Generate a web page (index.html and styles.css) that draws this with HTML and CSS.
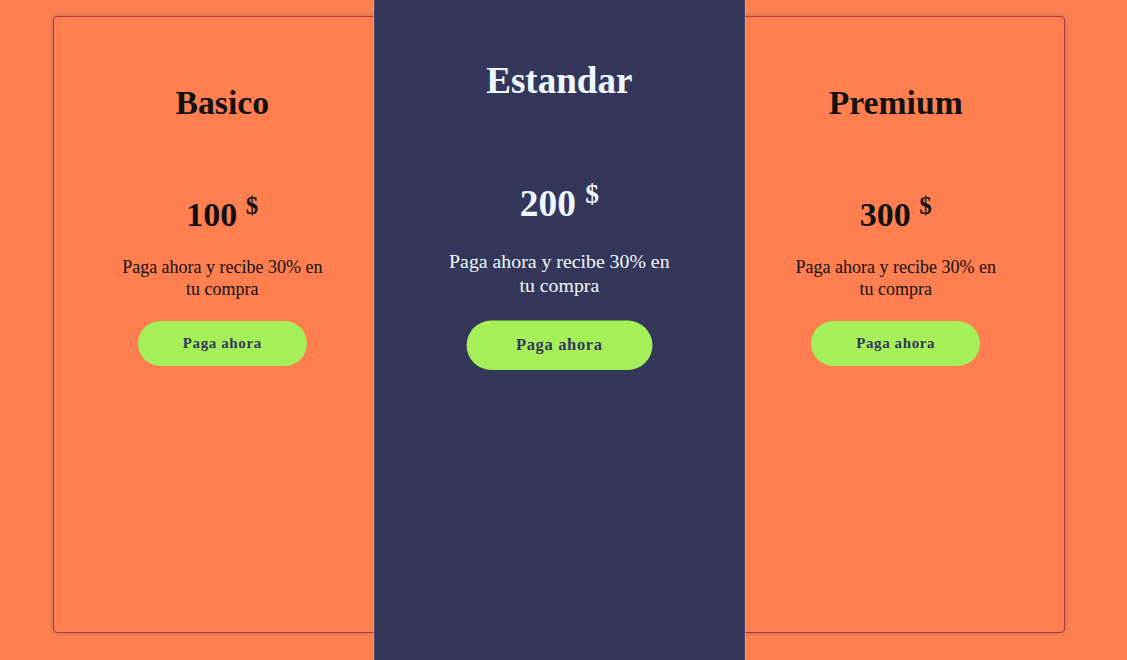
FILE: index.html
```html
<!DOCTYPE html>
<html lang="es">
<head>
<meta charset="utf-8">
<title>Planes</title>
<link rel="stylesheet" href="styles.css">
</head>
<body>
  <main class="plans">
    <section class="plan">
      <h1 class="plan-title">Basico</h1>
      <h2 class="plan-price">100 <sup class="currency">$</sup></h2>
      <p class="plan-text">Paga ahora y recibe 30% en tu compra</p>
      <button class="plan-btn">Paga ahora</button>
    </section>
    <section class="plan plan-featured">
      <h1 class="plan-title">Estandar</h1>
      <h2 class="plan-price">200 <sup class="currency">$</sup></h2>
      <p class="plan-text">Paga ahora y recibe 30% en tu compra</p>
      <button class="plan-btn">Paga ahora</button>
    </section>
    <section class="plan">
      <h1 class="plan-title">Premium</h1>
      <h2 class="plan-price">300 <sup class="currency">$</sup></h2>
      <p class="plan-text">Paga ahora y recibe 30% en tu compra</p>
      <button class="plan-btn">Paga ahora</button>
    </section>
  </main>
</body>
</html>
```

FILE: styles.css
```css
html {
  overflow: hidden;
}

body {
  margin: 0;
  padding: 16px 62px 0 53px;
  min-height: 660px;
  box-sizing: border-box;
  background: #ff7f50;
  font-family: "Liberation Serif", "Times New Roman", serif;
  color: #111;
}

.plans {
  display: flex;
  height: 617px;
  box-sizing: border-box;
  border: 1px solid #b0383c;
  border-radius: 4px;
  box-shadow: 0 0 4px rgba(120, 120, 120, 0.7);
}

.plan {
  flex: 1 1 0;
  display: flex;
  flex-direction: column;
  align-items: center;
  text-align: center;
  padding: 67px 60px 0;
}

.plan-featured {
  background: #35375a;
  color: #f0f8ff;
  transform: scale(1.1);
  transform-origin: 50% 309px;
  box-shadow: 0 0 2px rgba(200, 200, 200, 0.9);
}

.plan-title {
  margin: 0;
  font-size: 33.7px;
  line-height: 37px;
  font-weight: bold;
}

.plan-price {
  margin: 74px 0 0;
  font-size: 34px;
  line-height: 40px;
  font-weight: bold;
}

.currency {
  font-size: 25px;
  line-height: 0;
  vertical-align: 12px;
}

.plan-text {
  margin: 21px 0 0;
  font-size: 18px;
  line-height: 22px;
}

.plan-btn {
  margin-top: 21px;
  width: 169px;
  height: 45px;
  border: none;
  border-radius: 23px;
  background: #a5f059;
  color: #35375a;
  font-family: "Liberation Serif", "Times New Roman", serif;
  font-size: 15px;
  font-weight: bold;
  letter-spacing: 0.6px;
  cursor: pointer;
}
```
